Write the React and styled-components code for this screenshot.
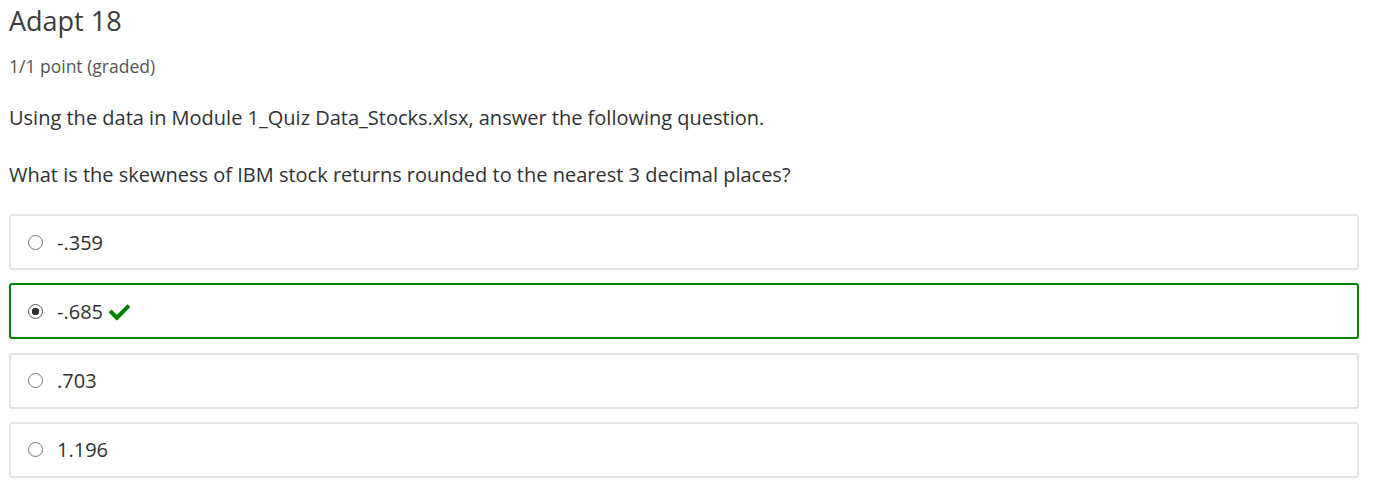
import React from 'react'
import styled, { createGlobalStyle } from 'styled-components'

const Global = createGlobalStyle`
  body {
    margin: 0;
    background: #fff;
    font-family: "Open Sans", "Noto Sans", sans-serif;
    color: #313131;
  }
`

const options = [
  { label: '-.359' },
  { label: '-.685', selected: true, correct: true },
  { label: '.703' },
  { label: '1.196' },
]

function App() {
  return (
    <>
      <Global />
      <Container>
        <Title>Adapt 18</Title>
        <Points>1/1 point (graded)</Points>
        <Question>Using the data in Module 1_Quiz Data_Stocks.xlsx, answer the following question.</Question>
        <Question>What is the skewness of IBM stock returns rounded to the nearest 3 decimal places?</Question>
        <Choices>
          {options.map((o) => (
            <Choice key={o.label} $correct={o.correct}>
              <Radio $selected={o.selected} />
              <Label>{o.label}</Label>
              {o.correct && (
                <svg width="21" height="19" viewBox="0 0 512 430" aria-hidden="true">
                  <path fill="#008100" d="M173.9 420.6L7.5 254.2c-10-10-10-26.2 0-36.2l36.2-36.2c10-10 26.2-10 36.2 0L192 293.9 432.1 53.8c10-10 26.2-10 36.2 0l36.2 36.2c10 10 10 26.2 0 36.2L210.1 420.6c-10 10-26.2 10-36.2 0z" />
                </svg>
              )}
            </Choice>
          ))}
        </Choices>
      </Container>
    </>
  )
}

const Container = styled.div`
  padding: 4px 18px 0 9px;
`

const Title = styled.h2`
  margin: 0;
  font-size: 27px;
  font-weight: 400;
  line-height: 33px;
  color: #3c3c3c;
`

const Points = styled.div`
  margin-top: 17px;
  font-size: 17.5px;
  line-height: 24px;
  color: #545454;
`

const Question = styled.p`
  margin: 26px 0 0;
  font-size: 20px;
  line-height: 28px;
  color: #313131;

  & + & {
    margin-top: 29px;
  }
`

const Choices = styled.div`
  display: flex;
  flex-direction: column;
  gap: 13.3px;
  margin-top: 25px;
`

const Choice = styled.label`
  display: flex;
  align-items: center;
  height: 56px;
  box-sizing: border-box;
  padding: 0 0 0 17px;
  border: 2px solid ${(p) => (p.$correct ? '#008100' : '#e3e3e3')};
  border-radius: 3px;
  background: #fff;
`

const Radio = styled.span`
  box-sizing: border-box;
  width: 15px;
  height: 15px;
  border-radius: 50%;
  border: 1.5px solid ${(p) => (p.$selected ? '#555' : '#767676')};
  background: ${(p) => (p.$selected ? 'radial-gradient(circle, #333 0 3.5px, #fff 4px)' : '#fff')};
  flex-shrink: 0;
`

const Label = styled.span`
  margin-left: 14px;
  margin-right: 6px;
  font-size: 20px;
  color: #313131;
`

export default App
